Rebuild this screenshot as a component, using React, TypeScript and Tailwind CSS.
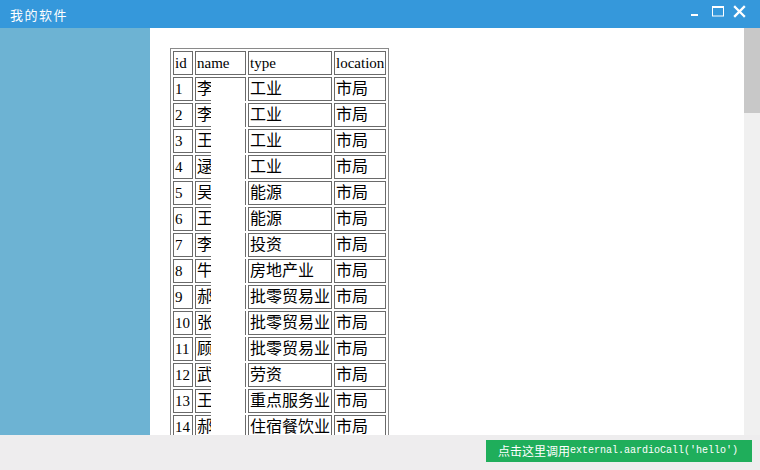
import React from "react";

const rows = [
  { id: 1, name: "李", type: "工业" },
  { id: 2, name: "李", type: "工业" },
  { id: 3, name: "王", type: "工业" },
  { id: 4, name: "逯", type: "工业" },
  { id: 5, name: "吴", type: "能源" },
  { id: 6, name: "王", type: "能源" },
  { id: 7, name: "李", type: "投资" },
  { id: 8, name: "牛", type: "房地产业" },
  { id: 9, name: "郝", type: "批零贸易业" },
  { id: 10, name: "张", type: "批零贸易业" },
  { id: 11, name: "顾", type: "批零贸易业" },
  { id: 12, name: "武", type: "劳资" },
  { id: 13, name: "王", type: "重点服务业" },
  { id: 14, name: "郝", type: "住宿餐饮业" },
];

const cell =
  "border border-[#6a6a6a] px-[1px] py-[1px] leading-[20px] whitespace-nowrap text-left font-normal align-middle";
const latin = "text-[15px]";
const cjk = "text-[16px]";

function WindowControls() {
  return (
    <svg width="60" height="28" viewBox="0 0 60 28" className="ml-auto mr-[12px]">
      {/* minimize */}
      <rect x="3" y="14" width="7" height="2" fill="#fff" />
      {/* maximize */}
      <rect x="24.5" y="6.5" width="11" height="9.5" fill="none" stroke="#fff" strokeWidth="1" />
      <rect x="24" y="6" width="12" height="2" fill="#fff" />
      {/* close */}
      <path d="M47 7 L56 16 M56 7 L47 16" stroke="#fff" strokeWidth="2.3" strokeLinecap="square" />
    </svg>
  );
}

export default function App() {
  return (
    <div className="w-[760px] h-[470px] flex flex-col overflow-hidden bg-[#eeedee] font-['Noto_Sans_CJK_SC',sans-serif]">
      {/* title bar */}
      <div className="h-[28px] flex items-center bg-[#3598db] pl-[10px] shrink-0">
        <span className="text-white text-[13px] tracking-[1.5px] leading-none">我的软件</span>
        <WindowControls />
      </div>

      {/* body */}
      <div className="flex h-[407px] shrink-0">
        <div className="w-[150px] bg-[#6db3d3] shrink-0" />
        <div className="flex-1 relative overflow-hidden bg-white pl-[20px] pt-[20px]">
          <table className="border-separate border-spacing-[2px] border border-[#8a8a8a] text-black font-['Liberation_Serif','Noto_Sans_CJK_SC',serif]">
            <thead>
              <tr>
                <th className={`${cell} ${latin} w-[20px]`}>id</th>
                <th className={`${cell} ${latin} w-[51px]`}>name</th>
                <th className={`${cell} ${latin} w-[84px]`}>type</th>
                <th className={`${cell} ${latin} w-[52px]`}>location</th>
              </tr>
            </thead>
            <tbody>
              {rows.map((r) => (
                <tr key={r.id}>
                  <td className={`${cell} ${latin}`}>{r.id}</td>
                  <td className={`${cell} ${cjk}`}>{r.name}</td>
                  <td className={`${cell} ${cjk}`}>{r.type}</td>
                  <td className={`${cell} ${cjk}`}>市局</td>
                </tr>
              ))}
            </tbody>
          </table>
          {/* erased names */}
          <div className="absolute left-[61px] top-[54px] w-[34px] h-[360px] bg-white" />
        </div>
        {/* scrollbar */}
        <div className="w-[16px] bg-[#f0f0f0] shrink-0">
          <div className="h-[85px] bg-[#c8c8c8]" />
        </div>
      </div>

      {/* bottom bar */}
      <div className="flex-1 flex justify-end items-start pt-[5px] pr-[8px]">
        <button className="h-[22px] w-[266px] bg-[#1fae5b] text-white flex items-center pl-[12px]">
          <span className="text-[12px] leading-none">点击这里调用</span>
          <span className="text-[10px] leading-none font-['Liberation_Mono',monospace]">external.aardioCall('hello')</span>
        </button>
      </div>
    </div>
  );
}
